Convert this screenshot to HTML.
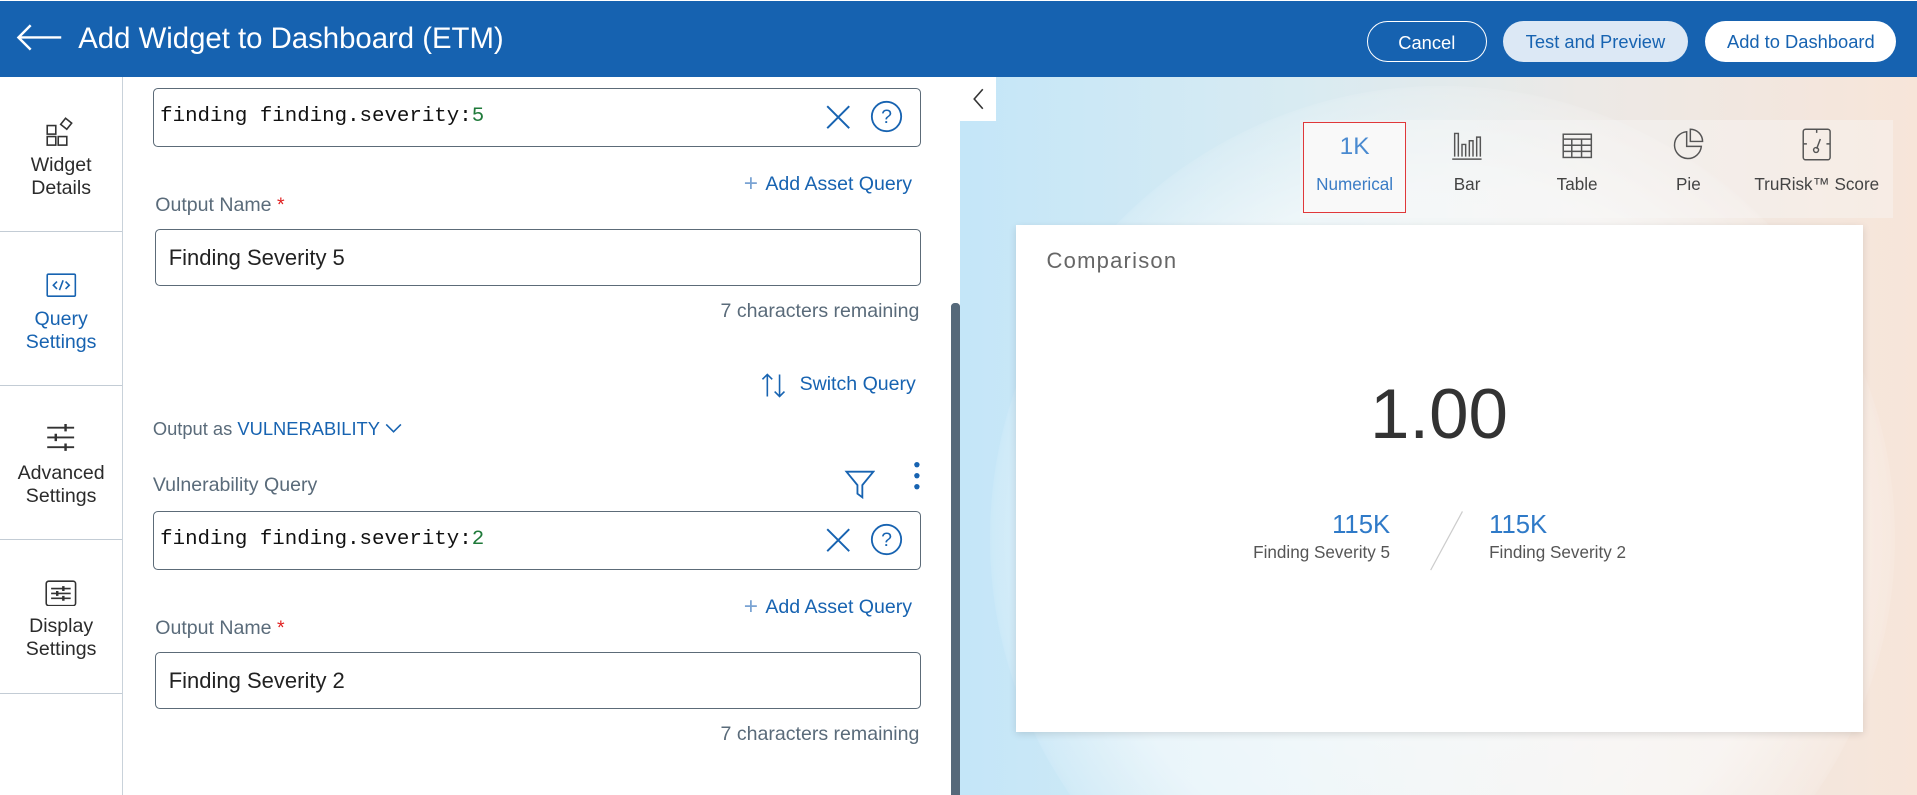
<!DOCTYPE html>
<html><head><meta charset="utf-8"><style>
html,body{margin:0;padding:0;overflow:hidden;background:#fff;width:1917px;height:795px}
#root{width:1568px;height:650px;position:relative;zoom:1.22258;font-family:"Liberation Sans",sans-serif;overflow:hidden}
.a{position:absolute}
.hdr{left:0;top:1px;width:1568px;height:62px;background:#1662b0}
.btn{position:absolute;top:17px;height:34px;border-radius:18px;font-size:15px;line-height:34px;text-align:center;box-sizing:border-box}
.nav{left:0;top:63px;width:100px;height:587px;border-right:1px solid #c9d2da;background:#fff}
.ni{position:absolute;left:0;width:100px;text-align:center;font-size:16px;line-height:19px;color:#2b2b2b}
.hl{position:absolute;left:0;width:100px;height:1px;background:#c3ccd5}
.box{position:absolute;border:1px solid #5c6b78;border-radius:4px;box-sizing:border-box;background:#fff}
.mono{font-family:"Liberation Mono",monospace;font-size:17px;color:#111}
.blue{color:#1763b1}
.lbl{font-size:16px;color:#5a6b7a}
.t{font-size:16px;position:absolute;white-space:nowrap}
</style></head><body><div id="root">
<div class="a hdr"></div>
<svg class="a" style="left:13px;top:20px" width="38" height="22"><path d="M2 11H37M12 1L2 11L12 21" stroke="#fff" stroke-width="2" fill="none"/></svg>
<div class="a" style="left:64px;top:18px;font-size:24px;color:#fff">Add Widget to Dashboard (ETM)</div>
<div class="btn" style="left:1118px;width:98px;border:1px solid #fff;color:#fff">Cancel</div>
<div class="btn" style="left:1229px;width:152px;background:#dce8f5;color:#1763b1">Test and Preview</div>
<div class="btn" style="left:1395px;width:156px;background:#fff;color:#1763b1">Add to Dashboard</div>

<div class="a nav"></div>
<svg class="a" style="left:38px;top:96px" width="24" height="24" fill="none" stroke="#333" stroke-width="1.3"><rect x="1" y="7" width="7" height="7"/><rect x="1" y="16" width="7" height="7"/><rect x="10" y="16" width="7" height="7"/><path d="M16 1l5 4-4 5-5-4z"/></svg>
<div class="ni" style="top:126px">Widget<br>Details</div>
<div class="hl" style="top:189px"></div>
<svg class="a" style="left:38px;top:223px" width="25" height="20" fill="none" stroke="#1763b1" stroke-width="1.3"><rect x="1" y="1" width="23" height="18" rx="1"/><path d="M9 7l-3 3 3 3M16 7l3 3-3 3M14 6l-3 8"/></svg>
<div class="ni blue" style="top:252px">Query<br>Settings</div>
<div class="hl" style="top:315px"></div>
<svg class="a" style="left:38px;top:347px" width="24" height="22" stroke="#333" stroke-width="1.5"><path d="M1 3H23M1 11H23M1 19H23"/><path d="M16 0v6M8 8v6M16 16v6" stroke-width="2"/></svg>
<div class="ni" style="top:378px">Advanced<br>Settings</div>
<div class="hl" style="top:441px"></div>
<svg class="a" style="left:37px;top:474px" width="26" height="22" fill="none" stroke="#333" stroke-width="1.3"><rect x="1" y="1" width="24" height="20" rx="2"/><path d="M5 7H21M5 11H21M5 15H21"/><path d="M15 5v4M10 9v4M15 13v4" stroke-width="2"/></svg>
<div class="ni" style="top:503px">Display<br>Settings</div>
<div class="hl" style="top:567px"></div>

<div class="box" style="left:125px;top:72px;width:628px;height:48px"></div>
<div class="a mono" style="left:131px;top:86px">finding finding.severity:<span style="color:#1f7a3a">5</span></div>
<svg class="a" style="left:676px;top:86px" width="20" height="20" stroke="#1763b1" stroke-width="1.6"><path d="M1 1L19 19M19 1L1 19"/></svg>
<svg class="a" style="left:712px;top:82px" width="27" height="27"><circle cx="13.5" cy="13.5" r="12" stroke="#1763b1" stroke-width="1.5" fill="none"/><text x="13.5" y="19" text-anchor="middle" font-size="16" fill="#1763b1" font-family="Liberation Sans">?</text></svg>
<div class="t blue" style="right:822px;top:138px"><span style="color:#7aa3d3;font-size:20px;margin-right:6px;position:relative;top:1px">+</span>Add Asset Query</div>
<div class="t lbl" style="left:127px;top:159px">Output Name <span style="color:#e02020">*</span></div>
<div class="box" style="left:127px;top:187px;width:626px;height:47px"></div>
<div class="t" style="left:138px;top:200px;font-size:18px;color:#222">Finding Severity 5</div>
<div class="t lbl" style="right:816px;top:245px">7 characters remaining</div>
<svg class="a" style="left:622px;top:304px" width="22" height="22" stroke="#1763b1" stroke-width="1.3" fill="none"><path d="M6 20V2M2 6l4-4 4 4M16 2v18M12 16l4 4 4-4"/></svg>
<div class="t blue" style="left:654px;top:305px">Switch Query</div>
<div class="t" style="left:125px;top:342px;color:#5a6b7a;font-size:15px">Output as <span class="blue">VULNERABILITY</span> <svg width="14" height="10" style="vertical-align:1px"><path d="M1 2l6 6 6-6" stroke="#1763b1" stroke-width="1.3" fill="none"/></svg></div>
<div class="t lbl" style="left:125px;top:388px">Vulnerability Query</div>
<svg class="a" style="left:690px;top:383px" width="26" height="26" fill="none" stroke="#1763b1" stroke-width="1.5"><path d="M2 3H24L15 14V24L11 21V14Z"/></svg>
<svg class="a" style="left:746px;top:377px" width="8" height="26" fill="#1763b1"><circle cx="4" cy="3" r="2.2"/><circle cx="4" cy="12" r="2.2"/><circle cx="4" cy="21" r="2.2"/></svg>
<div class="box" style="left:125px;top:418px;width:628px;height:48px"></div>
<div class="a mono" style="left:131px;top:432px">finding finding.severity:<span style="color:#1f7a3a">2</span></div>
<svg class="a" style="left:676px;top:432px" width="20" height="20" stroke="#1763b1" stroke-width="1.6"><path d="M1 1L19 19M19 1L1 19"/></svg>
<svg class="a" style="left:712px;top:428px" width="27" height="27"><circle cx="13.5" cy="13.5" r="12" stroke="#1763b1" stroke-width="1.5" fill="none"/><text x="13.5" y="19" text-anchor="middle" font-size="16" fill="#1763b1" font-family="Liberation Sans">?</text></svg>
<div class="t blue" style="right:822px;top:484px"><span style="color:#7aa3d3;font-size:20px;margin-right:6px;position:relative;top:1px">+</span>Add Asset Query</div>
<div class="t lbl" style="left:127px;top:505px">Output Name <span style="color:#e02020">*</span></div>
<div class="box" style="left:127px;top:533px;width:626px;height:47px"></div>
<div class="t" style="left:138px;top:546px;font-size:18px;color:#222">Finding Severity 2</div>
<div class="t lbl" style="right:816px;top:591px">7 characters remaining</div>
<div class="a" style="left:778px;top:248px;width:7px;height:402px;background:#56697a;border-radius:3px 3px 0 0"></div>

<div class="a" style="left:785px;top:63px;width:783px;height:587px;background:linear-gradient(90deg,#c4e6f8 0%,#d8ebf2 35%,#ece9e6 65%,#f7e5d9 100%)"></div>
<div class="a" style="left:810px;top:70px;width:740px;height:740px;border-radius:50%;background:radial-gradient(circle,rgba(255,255,255,0.75) 0%,rgba(255,255,255,0.55) 55%,rgba(255,255,255,0.15) 70%,rgba(255,255,255,0) 72%)"></div>
<div class="a" style="left:785px;top:63px;width:30px;height:36px;background:#fff"></div>
<svg class="a" style="left:796px;top:72px" width="10" height="18"><path d="M8 1L1 9L8 17" stroke="#333" stroke-width="1.3" fill="none"/></svg>
<div class="a" style="left:1063px;top:98px;width:485px;height:80px;background:rgba(248,249,250,0.35)"></div>
<div class="a" style="left:1066px;top:100px;width:84px;height:74px;border:1px solid #e0383a;box-sizing:border-box;background:#f9f9f9"></div>
<div class="t" style="left:1066px;width:84px;text-align:center;top:109px;font-size:20px;color:#4a8ad0">1K</div>
<div class="t" style="left:1066px;width:84px;text-align:center;top:143px;font-size:14px;color:#3a7cc5">Numerical</div>
<svg class="a" style="left:1187px;top:107px" width="26" height="24" fill="none" stroke="#555" stroke-width="1.2"><path d="M1 23H25M3 21V2H6V21M9 21V11H12V21M15 21V8H18V21M21 21V5H24V21"/></svg>
<div class="t" style="left:1170px;width:60px;text-align:center;top:143px;font-size:14px;color:#444">Bar</div>
<svg class="a" style="left:1278px;top:109px" width="25" height="21" fill="none" stroke="#555" stroke-width="1.2"><rect x="1" y="1" width="23" height="19"/><path d="M1 5H24M1 10H24M1 15H24M8 5V20M16 5V20"/></svg>
<div class="t" style="left:1260px;width:60px;text-align:center;top:143px;font-size:14px;color:#444">Table</div>
<svg class="a" style="left:1368px;top:105px" width="27" height="27" fill="none" stroke="#555" stroke-width="1.2"><path d="M12 3A11 11 0 1 0 24 15H12Z"/><path d="M15 1A10 10 0 0 1 25 11H15Z"/></svg>
<div class="t" style="left:1351px;width:60px;text-align:center;top:143px;font-size:14px;color:#444">Pie</div>
<svg class="a" style="left:1474px;top:105px" width="24" height="27" fill="none" stroke="#555" stroke-width="1.2"><rect x="1" y="1" width="22" height="25" rx="2"/><path d="M12 1v3M1 13h3M20 13h3M15 9l-3 8"/><circle cx="11.5" cy="18" r="2"/></svg>
<div class="t" style="left:1426px;width:120px;text-align:center;top:143px;font-size:14px;color:#444">TruRisk™ Score</div>

<div class="a" style="left:831px;top:184px;width:693px;height:415px;background:#fff;box-shadow:0 2px 6px rgba(0,0,0,0.12)"></div>
<div class="t" style="left:856px;top:203px;font-size:18px;color:#666;letter-spacing:1px">Comparison</div>
<div class="t" style="left:1027px;width:300px;text-align:center;top:306px;font-size:58px;color:#333">1.00</div>
<div class="t" style="right:431px;top:418px;font-size:21px;color:#2f7ac8">115K</div>
<div class="t" style="right:431px;top:444px;font-size:14px;color:#555">Finding Severity 5</div>
<svg class="a" style="left:1167px;top:416px" width="32" height="52"><path d="M29 2L3 50" stroke="#ccc" stroke-width="1"/></svg>
<div class="t" style="left:1218px;top:418px;font-size:21px;color:#2f7ac8">115K</div>
<div class="t" style="left:1218px;top:444px;font-size:14px;color:#555">Finding Severity 2</div>
</div></body></html>
